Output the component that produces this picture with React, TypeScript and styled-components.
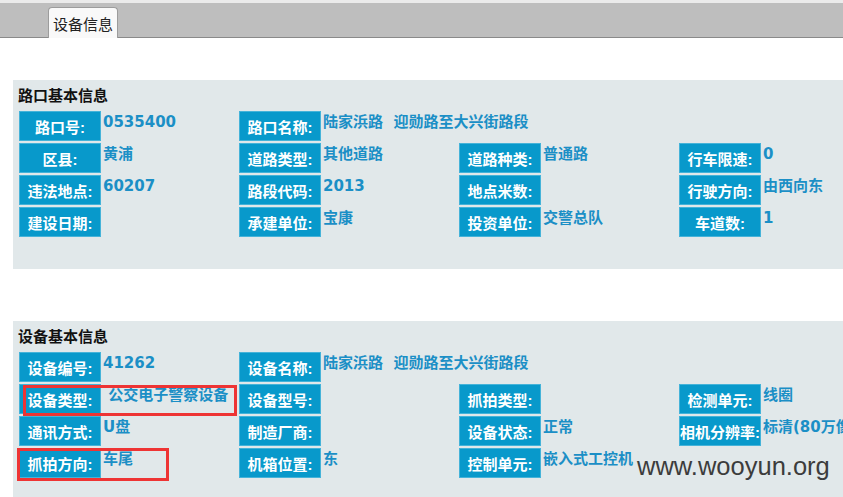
import React from "react";
import styled, { createGlobalStyle } from "styled-components";

const GlobalStyle = createGlobalStyle`
  html, body {
    margin: 0;
    padding: 0;
    background: #ffffff;
    overflow: hidden;
  }
  body {
    font-family: "Noto Sans CJK SC", "DejaVu Sans", sans-serif;
  }
`;

const Page = styled.div`
  position: relative;
  width: 843px;
  height: 497px;
  overflow: hidden;
`;

const TopBar = styled.div`
  display: flex;
  align-items: flex-end;
  height: 34px;
  padding-left: 48px;
  background: #bebebe;
  border-top: 3px solid #ebebeb;
  border-bottom: 1px solid #8a8a8a;
`;

const Tab = styled.div`
  height: 29px;
  margin-bottom: -1px;
  padding: 1px 4px 0;
  background: #f9f9f9;
  border: 1px solid #9c9c9c;
  border-bottom: none;
  border-radius: 4px 4px 0 0;
  font-family: "Noto Sans CJK SC", sans-serif;
  font-size: 15px;
  line-height: 29px;
  color: #222222;
`;

const Content = styled.div`
  display: flex;
  flex-direction: column;
  gap: 52px;
  padding: 42px 0 0 13px;
  width: 920px;
`;

const Panel = styled.section`
  background: #e1e8ea;
  padding: 5px 0 32px 6px;
`;

const PanelTitle = styled.h3`
  margin: 0 0 6px -1px;
  font-family: "Noto Sans CJK SC", sans-serif;
  font-size: 15px;
  font-weight: 700;
  line-height: 20px;
  color: #111111;
`;

const InfoGrid = styled.div`
  display: grid;
  grid-template-columns: repeat(4, 82px 134px);
  grid-auto-rows: 30px;
  column-gap: 2px;
  row-gap: 2px;
`;

const Label = styled.div`
  display: flex;
  align-items: center;
  justify-content: center;
  padding-top: 3px;
  box-sizing: border-box;
  background: #0899cb;
  box-shadow: inset 0 0 0 1px rgba(120, 200, 230, 0.55);
  color: #ffffff;
  font-family: "Liberation Sans", "Noto Sans CJK SC", sans-serif;
  font-size: 15px;
  font-weight: 700;
  line-height: 20px;
  white-space: nowrap;
`;

const Value = styled.div<{ $span?: number }>`
  grid-column: ${(p) => (p.$span ? `span ${p.$span}` : "auto")};
  padding-top: 2px;
  color: #1b8fc6;
  font-family: "DejaVu Sans", "Noto Sans CJK SC", sans-serif;
  font-size: 15px;
  font-weight: 700;
  line-height: 18px;
  white-space: pre;
`;

const Watermark = styled.div`
  position: absolute;
  left: 637px;
  top: 454px;
  font-family: "Liberation Sans", sans-serif;
  font-size: 25.5px;
  line-height: 25px;
  color: #3c3c3c;
`;

const Highlight = styled.div<{ $x: number; $y: number; $w: number; $h: number }>`
  position: absolute;
  left: ${(p) => p.$x}px;
  top: ${(p) => p.$y}px;
  width: ${(p) => p.$w}px;
  height: ${(p) => p.$h}px;
  box-sizing: border-box;
  border: 3px solid #ee3434;
`;

type Pair = { label: string; value?: string; span?: number };

const roadRows: Pair[][] = [
  [
    { label: "路口号:", value: "0535400" },
    { label: "路口名称:", value: "陆家浜路\u00a0\u00a0迎勋路至大兴街路段", span: 5 },
  ],
  [
    { label: "区县:", value: "黄浦" },
    { label: "道路类型:", value: "其他道路" },
    { label: "道路种类:", value: "普通路" },
    { label: "行车限速:", value: "0" },
  ],
  [
    { label: "违法地点:", value: "60207" },
    { label: "路段代码:", value: "2013" },
    { label: "地点米数:", value: "" },
    { label: "行驶方向:", value: "由西向东" },
  ],
  [
    { label: "建设日期:", value: "" },
    { label: "承建单位:", value: "宝康" },
    { label: "投资单位:", value: "交警总队" },
    { label: "车道数:", value: "1" },
  ],
];

const deviceRows: Pair[][] = [
  [
    { label: "设备编号:", value: "41262" },
    { label: "设备名称:", value: "陆家浜路\u00a0\u00a0迎勋路至大兴街路段", span: 5 },
  ],
  [
    { label: "设备类型:", value: "\u00a0公交电子警察设备" },
    { label: "设备型号:", value: "" },
    { label: "抓拍类型:", value: "" },
    { label: "检测单元:", value: "线圈" },
  ],
  [
    { label: "通讯方式:", value: "U盘" },
    { label: "制造厂商:", value: "" },
    { label: "设备状态:", value: "正常" },
    { label: "相机分辨率:", value: "标清(80万像素)" },
  ],
  [
    { label: "抓拍方向:", value: "车尾" },
    { label: "机箱位置:", value: "东" },
    { label: "控制单元:", value: "嵌入式工控机" },
  ],
];

function InfoPanel({ title, rows }: { title: string; rows: Pair[][] }) {
  return (
    <Panel>
      <PanelTitle>{title}</PanelTitle>
      <InfoGrid>
        {rows.map((row, ri) => (
          <React.Fragment key={ri}>
            {row.map((p, pi) => (
              <React.Fragment key={pi}>
                <Label>{p.label}</Label>
                <Value $span={p.span}>{p.value}</Value>
              </React.Fragment>
            ))}
          </React.Fragment>
        ))}
      </InfoGrid>
    </Panel>
  );
}

export default function App() {
  return (
    <Page>
      <GlobalStyle />
      <TopBar>
        <Tab>设备信息</Tab>
      </TopBar>
      <Content>
        <InfoPanel title="路口基本信息" rows={roadRows} />
        <InfoPanel title="设备基本信息" rows={deviceRows} />
      </Content>
      <Highlight $x={23} $y={385} $w={214} $h={31} />
      <Highlight $x={17} $y={448} $w={152} $h={33} />
      <Watermark>www.wooyun.org</Watermark>
    </Page>
  );
}
